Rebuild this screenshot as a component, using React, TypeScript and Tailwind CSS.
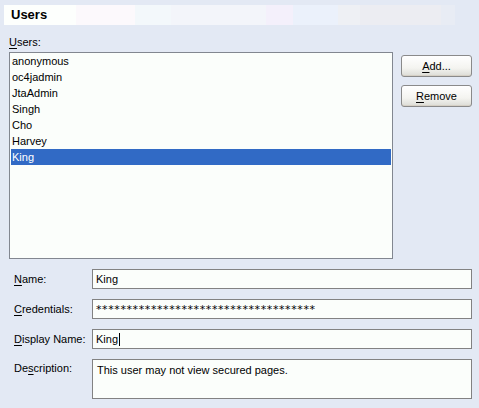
import React from 'react';

const users = ['anonymous', 'oc4jadmin', 'JtaAdmin', 'Singh', 'Cho', 'Harvey', 'King'];

// label text with one underlined access-key letter
const Mnemonic = ({ text, at }: { text: string; at: number }) => (
  <span>
    {text.slice(0, at)}
    <span className="underline underline-offset-2">{text[at]}</span>
    {text.slice(at + 1)}
  </span>
);

const XpButton = ({ text, at }: { text: string; at: number }) => (
  <button
    type="button"
    className="w-[71px] h-[22px] rounded-[3px] border border-[#8a8a8a] bg-[linear-gradient(#ffffff,#f4f4f0_60%,#dcdcd6)] text-[11px] text-black leading-none shadow-[inset_0_-1px_0_#d6d0c5]"
  >
    <Mnemonic text={text} at={at} />
  </button>
);

export default function App() {
  const selected = 'King';

  return (
    <div
      className="w-[479px] h-[408px] bg-[#e3e9f4] pt-[5px] pl-[4px] text-[11px] text-black overflow-hidden"
      style={{ fontFamily: '"Liberation Sans", Arial, sans-serif' }}
    >
      {/* Title bar */}
      <div className="w-[451px] h-[20px] flex items-center pl-[7px] text-[13px] font-bold bg-[linear-gradient(90deg,#fdfffd_0,#fdfffd_16%,#fcf9fc_16%,#fcf9fc_29%,#f3f8fb_29%,#f3f8fb_37%,#f3f5fa_37%,#f3f5fa_58%,#f4f0fb_58%,#f4f0fb_64%,#ebf1fb_64%,#ebf1fb_74%,#eef0f4_74%,#eef0f4_79%,#ecedf2_79%,#ecedf2_97%,#e8ecf4_97%)]">
        Users
      </div>

      <div className="pl-[5px] mt-[10px] h-[16px] leading-[14px]">
        <Mnemonic text="Users:" at={0} />
      </div>

      <div className="flex mt-[1px] pl-[5px]">
        <div className="w-[384px] h-[207px] border border-[#828790] bg-[#fbfefb] px-[1px]">
          {users.map((u) => (
            <div
              key={u}
              className={
                'h-[16px] leading-[16px] pl-[1px] ' +
                (u === selected ? 'bg-[#316ac5] text-white' : '')
              }
            >
              {u}
            </div>
          ))}
        </div>
        <div className="flex flex-col gap-[8px] ml-[8px] mt-[3px]">
          <XpButton text="Add..." at={0} />
          <XpButton text="Remove" at={0} />
        </div>
      </div>

      {/* Details form */}
      <div className="grid grid-cols-[78px_380px] gap-y-[10px] mt-[10px] pl-[10px] items-center">
        <div><Mnemonic text="Name:" at={0} /></div>
        <div className="h-[20px] border border-[#828282] bg-[#fbfefb] pl-[3px] leading-[18px]">King</div>

        <div><Mnemonic text="Credentials:" at={0} /></div>
        <div
          className="h-[20px] border border-[#828282] bg-[#fbfefb] pl-[3px] leading-[19px] text-[11px] tracking-[0.6px]"
          style={{ fontFamily: '"DejaVu Sans", sans-serif' }}
        >
          ************************************
        </div>

        <div><Mnemonic text="Display Name:" at={0} /></div>
        <div className="h-[20px] border border-[#828282] bg-[#fbfefb] pl-[3px] leading-[18px] flex items-center">
          King<span className="inline-block w-px h-[13px] bg-black ml-[1px]" />
        </div>

        <div className="self-start pt-[1px]"><Mnemonic text="Description:" at={2} /></div>
        <div className="h-[40px] border border-[#828282] bg-[#fbfefb] pl-[4px] pt-[3px] leading-[14px]">
          This user may not view secured pages.
        </div>
      </div>
    </div>
  );
}
